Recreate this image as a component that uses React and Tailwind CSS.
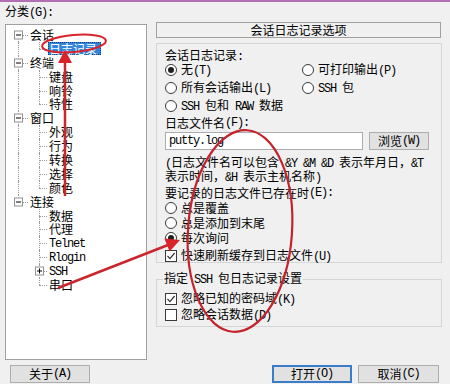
import React from 'react';

// Latin runs are drawn in a narrow mono face, CJK in Noto
function Tx({ s }) {
  return s
    .split(/([\x20-\x7e]+)/)
    .filter(Boolean)
    .map((p, i) =>
      /^[\x20-\x7e]+$/.test(p) ? (
        <span key={i} className="font-['Liberation_Mono',monospace] text-[12px] tracking-[-1.2px]">
          {p}
        </span>
      ) : (
        <span key={i}>{p}</span>
      )
    );
}

const TREE = [
  { t: '会话', root: true },
  { t: '日志记录', sel: true, last: true },
  { t: '终端', root: true },
  { t: '键盘' },
  { t: '响铃' },
  { t: '特性', last: true },
  { t: '窗口', root: true },
  { t: '外观' },
  { t: '行为' },
  { t: '转换' },
  { t: '选择' },
  { t: '颜色', last: true },
  { t: '连接', root: true, lastRoot: true },
  { t: '数据' },
  { t: '代理' },
  { t: 'Telnet' },
  { t: 'Rlogin' },
  { t: 'SSH', plus: true },
  { t: '串口', last: true },
];

function Box({ plus }) {
  return (
    <span className="absolute top-1/2 flex h-[9px] w-[9px] -translate-y-1/2 items-center justify-center border border-[#919191] bg-white">
      <span className="h-[1px] w-[5px] bg-black" />
      {plus && <span className="absolute h-[5px] w-[1px] bg-black" />}
    </span>
  );
}

function TreeRows() {
  let parentLast = false;
  return TREE.map((n, i) => {
    if (n.root) {
      parentLast = !!n.lastRoot;
      return (
        <div key={i} className="relative flex h-[13.9px] items-center pl-[24px]">
          {i > 0 && <span className="absolute left-[12px] top-0 h-1/2 border-l border-dotted border-[#9a9a9a]" />}
          {!n.lastRoot && <span className="absolute left-[12px] top-1/2 bottom-0 border-l border-dotted border-[#9a9a9a]" />}
          <span className="absolute left-[12px] top-1/2 w-[10px] border-t border-dotted border-[#9a9a9a]" />
          <span className="absolute left-[8px] top-0 h-full">
            <Box />
          </span>
          <span className="leading-[12px]">{n.t}</span>
        </div>
      );
    }
    return (
      <div key={i} className="relative flex h-[13.9px] items-center pl-[42px]">
        {!parentLast && <span className="absolute left-[12px] top-0 bottom-0 border-l border-dotted border-[#9a9a9a]" />}
        <span
          className={`absolute left-[33px] top-0 border-l border-dotted border-[#9a9a9a] ${n.last ? 'h-1/2' : 'bottom-0'}`}
        />
        <span className="absolute left-[33px] top-1/2 w-[8px] border-t border-dotted border-[#9a9a9a]" />
        {n.plus && (
          <span className="absolute left-[29px] top-0 h-full">
            <Box plus />
          </span>
        )}
        {n.sel ? (
          <span className="border border-dotted border-[#1b3d6b] bg-[#3285dc] pr-[3px] leading-[11px] text-white">
            {n.t}
          </span>
        ) : (
          <span className="pl-[1px] leading-[12px]">
            <Tx s={n.t} />
          </span>
        )}
      </div>
    );
  });
}

function Radio({ on }) {
  return (
    <span className="flex h-[12px] w-[12px] shrink-0 items-center justify-center rounded-full border border-[#3a3a3a] bg-white">
      {on && <span className="h-[6px] w-[6px] rounded-full bg-[#1e1e1e]" />}
    </span>
  );
}

function Check({ on }) {
  return (
    <span className="flex h-[12px] w-[12px] shrink-0 items-center justify-center border border-[#3a3a3a] bg-white">
      {on && (
        <svg width="10" height="10" viewBox="0 0 10 10">
          <path d="M1.5 5 L4 7.6 L8.6 2" fill="none" stroke="#333" strokeWidth="1.2" />
        </svg>
      )}
    </span>
  );
}

function Opt({ kind = 'radio', on, label, h = 'h-[18px]' }) {
  return (
    <div className={`flex items-center gap-[4px] whitespace-nowrap ${h}`}>
      {kind === 'radio' ? <Radio on={on} /> : <Check on={on} />}
      <span className="leading-[12px]">
        <Tx s={label} />
      </span>
    </div>
  );
}

function Btn({ label, def, w = 'w-[80px]' }) {
  return (
    <div
      className={`flex h-[18px] items-center justify-center bg-[#e1e1e1] leading-[12px] ${w} ${
        def ? 'border-2 border-[#3b7cc6]' : 'border border-[#adadad]'
      }`}
    >
      <Tx s={label} />
    </div>
  );
}

export default function App() {
  return (
    <div className="relative h-[384px] w-[450px] overflow-hidden bg-[#f0f0f0] font-['Noto_Sans_CJK_SC',sans-serif] text-[12px] text-black">
      <div className="h-[2px] bg-[#b36fb4]" />

      <div className="flex gap-[9px] pl-[5px]">
        {/* 左侧分类树 */}
        <div className="w-[142px]">
          <div className="mb-[4px] pt-[2px] leading-[13px]">
            <Tx s="分类(G):" />
          </div>
          <div className="h-[336px] border border-[#a0a0a0] bg-white pt-[3px]">
            <TreeRows />
          </div>
        </div>

        {/* 右侧选项 */}
        <div className="w-[286px] pt-[20px]">
          <div className="mr-[1px] flex h-[16px] items-center justify-center border border-[#a0a0a0] leading-[14px]">
            会话日志记录选项
          </div>

          <div className="mt-[5px] h-[220px] border border-[#d5d5d5] px-[8px] pt-[4px]">
            <div className="h-[13px] leading-[13px]">
              <Tx s="会话日志记录:" />
            </div>
            <div className="grid grid-cols-[137px_1fr]">
              <Opt on label="无(T)" />
              <Opt label="可打印输出(P)" />
              <Opt label="所有会话输出(L)" />
              <Opt label="SSH 包" />
              <Opt label="SSH 包和 RAW 数据" />
            </div>
            <div className="flex h-[15px] items-center leading-[12px]">
              <Tx s="日志文件名(F):" />
            </div>
            <div className="mt-[2px] flex h-[18px] gap-[6px]">
              <div className="flex w-[198px] items-center border border-[#abadb3] bg-white pl-[3px] leading-[12px]">
                <Tx s="putty.log" />
              </div>
              <Btn label="浏览(W)" w="w-[60px]" />
            </div>
            <div className="mt-[6px] whitespace-nowrap leading-[12px]">
              <Tx s="(日志文件名可以包含 &Y &M &D 表示年月日，&T" />
              <br />
              <Tx s="表示时间，&H 表示主机名称)" />
            </div>
            <div className="mt-[2px] flex h-[14px] items-center leading-[12px]">
              <Tx s="要记录的日志文件已存在时(E):" />
            </div>
            <Opt label="总是覆盖" h="h-[15px]" />
            <Opt label="总是添加到末尾" h="h-[15px]" />
            <Opt on label="每次询问" h="h-[15px]" />
            <div className="mt-[3px]">
              <Opt kind="check" on label="快速刷新缓存到日志文件(U)" h="h-[16px]" />
            </div>
          </div>

          <fieldset className="mt-[8px] border border-[#d5d5d5] px-[8px] pb-[3px]">
            <legend className="-ml-[2px] px-[1px] leading-[14px]">
              <Tx s="指定 SSH 包日志记录设置" />
            </legend>
            <div className="pt-[4px]">
              <Opt kind="check" on label="忽略已知的密码域(K)" h="h-[16px]" />
              <Opt kind="check" label="忽略会话数据(D)" h="h-[16px]" />
            </div>
          </fieldset>
        </div>
      </div>

      <div className="mt-[5px] flex pl-[10px] pr-[11px]">
        <Btn label="关于(A)" />
        <div className="ml-auto flex gap-[6px]">
          <Btn def label="打开(O)" />
          <Btn label="取消(C)" w="w-[81px]" />
        </div>
      </div>

      {/* 红色标注 */}
      <svg className="pointer-events-none absolute left-0 top-0" width="450" height="384" viewBox="0 0 450 384">
        <ellipse cx="74" cy="43.5" rx="32" ry="8.5" transform="rotate(-5 74 43.5)" fill="none" stroke="#d8232c" strokeWidth="2" />
        <line x1="65" y1="196" x2="65" y2="60" stroke="#c9262d" strokeWidth="2.5" />
        <polygon points="65,50 58,63 72,63" fill="#d9232b" />
        <line x1="58" y1="288" x2="168" y2="245" stroke="#c9262d" strokeWidth="2.5" />
        <polygon points="180,240 164.4,238.6 169.6,251.6" fill="#d9232b" />
        <ellipse cx="240" cy="231" rx="52" ry="101" transform="rotate(4 240 231)" fill="none" stroke="#c4232b" strokeWidth="2.2" />
      </svg>
    </div>
  );
}
